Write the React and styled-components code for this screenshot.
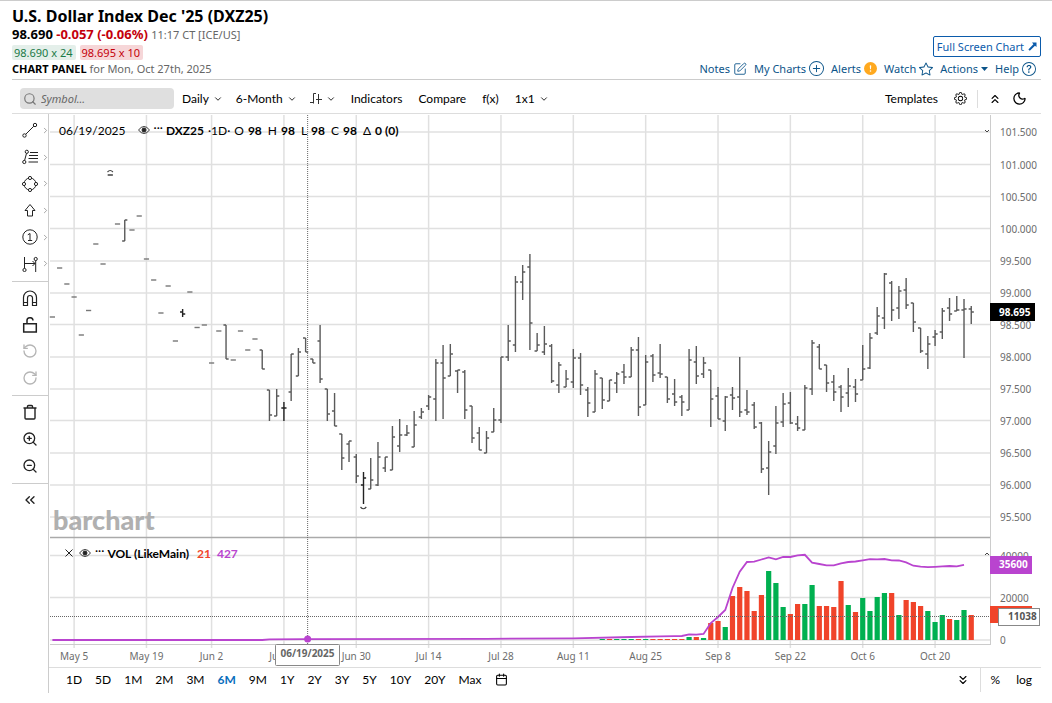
import React, { Component } from 'react'
import styled, { createGlobalStyle } from 'styled-components'
import { BsGear, BsStar, BsPlusCircle, BsQuestionCircle, BsExclamationCircleFill } from 'react-icons/bs'
import {
  Moon, Search, SquarePen, ChevronDown, ChevronRight, ChevronsUp, ChevronsDown,
  ChevronsLeft, RotateCcw, RotateCw, ZoomIn, ZoomOut, Calendar
} from 'lucide-react'

const GlobalStyle = createGlobalStyle`
  * { box-sizing: border-box; }
  body {
    margin: 0;
    background: #fff;
    color: #000;
    font-family: 'Noto Sans', 'Open Sans', sans-serif;
  }
  button {
    padding: 0;
    border: 0;
    background: none;
    color: inherit;
    font: inherit;
    cursor: pointer;
  }
`
const Page = styled.div`
  border-top: 1px solid #ccc;
  padding: 0 11px 10px 12px;
`
const Header = styled.header`
  display: flex;
  justify-content: space-between;
  align-items: flex-end;
  padding: 5px 0 2px;
  border-bottom: 1px solid #ccc;
`
const Title = styled.h1`
  margin: 0;
  font-size: 16px;
  line-height: 20px;
  font-weight: 700;
`
const PriceLine = styled.div`
  font-size: 13px;
  line-height: 17px;
  font-weight: 700;
`
const Change = styled.span`
  color: #c4000b;
`
const Muted = styled.span`
  color: #666;
  font-size: 11px;
  font-weight: 400;
`
const Quotes = styled.div`
  display: flex;
  gap: 4px;
  margin: 2px 0 1px;
`
const Quote = styled.span`
  padding: 0 3px 0 2px;
  border-radius: 2px;
  font-size: 11px;
  line-height: 15px;
  color: ${p => p.ask ? '#c4000b' : '#1a7a48'};
  background: ${p => p.ask ? '#f6d6d8' : '#e4efea'};
`
const PanelLine = styled.div`
  font-size: 11px;
  line-height: 16px;
`
const HeaderRight = styled.div`
  display: flex;
  flex-direction: column;
  align-items: flex-end;
  gap: 3px;
`
const FullScreen = styled.a`
  display: flex;
  align-items: center;
  gap: 4px;
  height: 21px;
  padding: 0 3px;
  border: 1px solid #0b5bab;
  border-radius: 2px;
  color: #0b5bab;
  font-size: 11px;
  text-decoration: none;
`
const Links = styled.nav`
  display: flex;
  gap: 7px;
  padding-right: 5px;
`
const HeaderLink = styled.a`
  display: flex;
  align-items: center;
  gap: 3px;
  height: 17px;
  color: #0b5489;
  font-size: 11px;
  text-decoration: none;
`
const Toolbar = styled.div`
  display: flex;
  align-items: center;
  height: 34px;
  padding: 4px 14px 0 8px;
  border-bottom: 1px solid #ddd;
  font-family: Lato, sans-serif;
  font-size: 12px;
`
const SearchBox = styled.label`
  display: flex;
  align-items: center;
  gap: 4px;
  width: 154px;
  height: 21px;
  margin-right: 8px;
  padding: 0 3px;
  border-radius: 4px;
  background: #dfdfdf;
  color: #777;
`
const SearchInput = styled.input`
  flex: 1;
  min-width: 0;
  padding: 0;
  border: 0;
  outline: 0;
  background: transparent;
  font: italic 11px 'Noto Sans', sans-serif;
  &::placeholder { color: #666; }
`
const ToolButton = styled.button`
  display: flex;
  align-items: center;
  gap: 4px;
  height: 21px;
  margin-right: ${p => p.gap || 16}px;
`
const IconButton = styled.button`
  display: flex;
`
const ToolbarEnd = styled.div`
  display: flex;
  align-items: center;
  gap: 10px;
  margin-left: auto;
`
const Divider = styled.span`
  width: 1px;
  height: ${p => p.size}px;
  background: #ddd;
`
const Body = styled.div`
  display: flex;
`
const Sidebar = styled.aside`
  flex: none;
  width: 37px;
  border-right: 1px solid #ccc;
`
const ToolGroup = styled.div`
  display: flex;
  flex-direction: column;
  height: ${p => p.size}px;
  padding: 3px 0 4px;
  border-bottom: ${p => p.last ? 0 : 1}px solid #ccc;
`
const Tool = styled.button`
  flex: 1;
  display: grid;
  grid-template-columns: 16px 8px;
  align-items: center;
  justify-content: start;
  gap: 3px;
  padding-left: 10px;
  color: ${p => p.faded ? '#b5b5b5' : '#222'};
`
const Main = styled.main`
  flex: 1;
  min-width: 0;
`
const ChartArea = styled.div`
  position: relative;
`
const ChartSvg = styled.svg`
  display: block;
  width: 100%;
  height: auto;
  font-family: 'Noto Sans', sans-serif;
  font-size: 10px;
`
const Legend = styled.div`
  position: absolute;
  top: ${p => p.top}px;
  left: ${p => p.left}px;
  display: flex;
  align-items: center;
  height: 16px;
  font: 12px Lato, sans-serif;
  white-space: pre;
`
const LegendDate = styled.span`
  margin-right: 12px;
`
const LegendButton = styled.button`
  display: flex;
  margin-right: ${p => p.gap}px;
`
const LegendDots = styled.button`
  align-self: flex-start;
  margin-right: 3px;
  line-height: 11px;
`
const LegendItem = styled.span`
  margin-right: ${p => p.gap || 4}px;
  color: ${p => p.color || '#000'};
  font-weight: ${p => p.bold ? 700 : 400};
`
const BottomBar = styled.div`
  display: flex;
  align-items: center;
  gap: 13px;
  height: 26px;
  padding: 0 9px 2px 17px;
  border-top: 1px solid #ddd;
  font: 12px Lato, sans-serif;
`
const RangeButton = styled.button`
  color: ${p => p.active ? '#0a6ebd' : '#000'};
  font-weight: ${p => p.active ? 700 : 400};
`
const BottomEnd = styled.div`
  display: flex;
  align-items: center;
  gap: 10px;
  margin-left: auto;
`
const ScaleButtons = styled.div`
  display: flex;
  gap: 16px;
`

const FIRST_X = 52.4
const STEP = 7.235
const barX = i => FIRST_X + i * STEP

// open, high, low, close on the vertical scale of the plot; one number is a flat day
const BARS = [
  317, 268, 284, 297, 335, 310.5, 244, 264, 175, 224, [241, 220, 241, 220], 230,
  216, 259, 280, 313, 286, 341, [312, 309, 317, 314], 292, 327.5, 325, 363, 331,
  [325, 325, 359, 359], 360, 331, 350, 339, [350, 350, 369, 369],
  [390, 390, 421, 415], [416, 389, 416, 396], [408, 402, 421, 408], [392, 354, 401, 354],
  [376, 348, 376, 352], [338, 338, 352, 352], [359, 359, 363, 363], [341, 325, 383, 379],
  [389, 389, 421, 414], [411, 393, 426, 426], [434, 434, 470, 458], [444, 441, 462, 441],
  [457, 454, 483, 476], [485, 472, 504, 478], [489, 458, 489, 480], [485, 442, 486, 457],
  [468, 457, 472, 457], [470, 426, 470, 437], [446, 419, 452, 435], [435, 425, 436, 433],
  [447, 411, 447, 425], [417, 408, 419, 412], [406, 395, 410, 397], [399, 359, 421, 363],
  [363, 345, 419, 378], [376, 344, 376, 354], [371, 370, 393, 370], [372, 370, 419, 410],
  [406, 406, 443, 438], [433, 427, 450, 450], [453, 431, 453, 438], [432, 408, 432, 420],
  [420, 357, 423, 357], [357, 325, 361, 341], [345, 276, 352, 282], [282, 265, 300, 272],
  [267, 254, 350, 323], [351, 333, 351, 345], [352, 326, 355, 344], [346, 344, 383, 381],
  [385, 362, 393, 365], [387, 370, 387, 379], [382, 349, 388, 358], [358, 353, 395, 385],
  [390, 387, 417, 403], [412, 370, 412, 374], [378, 378, 409, 400], [401, 380, 401, 380],
  [383, 372, 393, 374], [372, 364, 384, 377], [377, 347, 377, 350], [350, 337, 416, 407],
  [405, 355, 405, 362], [356, 354, 382, 375], [373, 344, 378, 374], [377, 377, 403, 399],
  [394, 379, 406, 402], [397, 395, 416, 402], [410, 349, 410, 360], [362, 346, 384, 376],
  [374, 357, 378, 363], [370, 370, 427, 399], [396, 387, 419, 419], [421, 396, 431, 397],
  [395, 387, 410, 398], [397, 357, 417, 412], [410, 390, 415, 412], [405, 402, 429, 427],
  [423, 422, 473, 469], [468, 441, 495, 452], [446, 406, 454, 423], [422, 393, 427, 404],
  [403, 392, 424, 423], [424, 416, 431, 428], [430, 385, 430, 388], [389, 340, 395, 343],
  [347, 344, 369, 369], [365, 365, 392, 383], [382, 375, 401, 392], [387, 385, 412, 397],
  [393, 368, 407, 386], [387, 379, 402, 394], [380, 345, 380, 369], [368, 333, 369, 338],
  [333, 307, 335, 316], [318, 273, 329, 274], [283, 281, 321, 310], [308, 286, 319, 291],
  [290, 278, 309, 305], [303, 303, 332, 322], [328, 328, 353, 351], [354, 336, 369, 344],
  [337, 330, 346, 334], [332, 308, 339, 311], [308, 298, 321, 314], [311, 296, 311, 310],
  [310, 299, 358, 309], [309, 306, 324, 312]
]

const STRONG_BARS = [8, 18, 32, 43]

const PRICES = [
  ['101.500', 132], ['101.000', 164.5], ['100.500', 196.5], ['100.000', 228.5],
  ['99.500', 261], ['99.000', 293], ['98.500', 324.5], ['98.000', 357],
  ['97.500', 389], ['97.000', 420.5], ['96.500', 453], ['96.000', 485], ['95.500', 517]
]
const VOLUMES = [['40000', 555.5], ['20000', 597.5], ['0', 640]]
const DATES = [
  ['May 5', 3], ['May 19', 13], ['Jun 2', 22], ['Jun 16', 32], ['Jun 30', 42],
  ['Jul 14', 52], ['Jul 28', 62], ['Aug 11', 72], ['Aug 25', 82], ['Sep 8', 92],
  ['Sep 22', 102], ['Oct 6', 112], ['Oct 20', 122]
]

// height of the volume bar, negative on a down day
const FIRST_VOLUME = 76
const VOLUME_BARS = [
  1, -1, 1, 1, 1, -1, 1, -1, -1, -1, -1, -1,
  3, -3, 2, -17, -19, 13, -44, -53, -49, -29, -45, 69, 57, 33, -26, -36, 36, 55,
  -34, -34, -33, -59, 35, -28, 42, 29, 43, 47, -47, 25, -40, -38, -34, 29, 18, 25,
  -21, 20, 30, -25
]

const AVERAGE = [
  [0, 640], [29, 640], [30, 639.3], [35, 639.2], [60, 638.8], [72, 638.3], [80, 637],
  [84, 636.4], [86, 636.2], [87, 636], [88, 634.4], [89, 634.7], [90, 634], [91, 623],
  [92, 617], [93, 610], [94, 588], [95, 571.7], [96, 562], [97, 561.7], [98, 559.5],
  [99, 557.4], [100, 559.3], [101, 557], [102, 557], [103, 555.3], [104, 554.8],
  [105, 562.6], [106, 564], [107, 565.4], [108, 565.4], [109, 563.3], [110, 562],
  [111, 561.5], [112, 560.4], [113, 559.2], [114, 559.4], [115, 559], [116, 560.4],
  [117, 560.5], [118, 562.4], [119, 565.7], [120, 566.7], [121, 567.2], [122, 566.8],
  [123, 566.4], [124, 566], [125, 566.3], [126, 564.8]
]

const RANGES = ['1D', '5D', '1M', '2M', '3M', '6M', '9M', '1Y', '2Y', '3Y', '5Y', '10Y', '20Y', 'Max']

const Icon = styled.svg.attrs({ width: 16, height: 16, viewBox: '0 0 16 16' })`
  display: block;
  fill: none;
  stroke: currentColor;
  stroke-width: 1;
`

const LineIcon = () => (
  <Icon>
    <circle cx='2.5' cy='13.5' r='1.7' />
    <circle cx='13' cy='3' r='1.7' />
    <path d='M3.8 12.2L11.8 4.2' />
  </Icon>
)
const FibIcon = () => (
  <Icon>
    <circle cx='2.3' cy='13' r='1.6' />
    <circle cx='4.8' cy='2.8' r='1.6' />
    <path d='M2.6 11.4L4.5 4.4M8 3.5h8M7 6.5h9M6.5 9.5h9.5M6.5 13h9.5' />
  </Icon>
)
const ShapeIcon = () => (
  <Icon>
    <circle cx='8' cy='8' r='6' />
    <g fill='#fff'>
      <circle cx='8' cy='2' r='1.6' />
      <circle cx='14' cy='8' r='1.6' />
      <circle cx='8' cy='14' r='1.6' />
      <circle cx='2' cy='8' r='1.6' />
    </g>
  </Icon>
)
const ArrowIcon = () => (
  <Icon>
    <path d='M8 2.5L13 8.5H10.5V14H5.5V8.5H3Z' strokeLinejoin='round' />
  </Icon>
)
const NumberIcon = () => (
  <Icon>
    <circle cx='8' cy='8' r='7.2' />
    <path d='M5.8 5.8L8 4.5V11.5M6 11.5h4.2' />
  </Icon>
)
const MeasureIcon = () => (
  <Icon>
    <circle cx='2.5' cy='14' r='1.6' />
    <circle cx='13.7' cy='3' r='1.6' />
    <path d='M2.5 1v11.4M13.7 4.6V16M3 7.5h10M10.5 5l2.5 2.5-2.5 2.5' />
  </Icon>
)
const MagnetIcon = () => (
  <Icon>
    <path d='M1.5 15.5V7.5a6.5 6.5 0 0 1 13 0v8h-4V8a2.5 2.5 0 0 0-5 0v7.5zM1.5 12.5h4M10.5 12.5h4' strokeWidth='1.2' />
  </Icon>
)
const UnlockIcon = () => (
  <Icon>
    <path d='M1.7 6.7h12.6v8.3H1.7zM5 6.5V4a3 3 0 0 1 6-.5' strokeWidth='1.5' />
  </Icon>
)
const TrashIcon = () => (
  <Icon>
    <path d='M1.5 4h13M3 4v10a1 1 0 0 0 1 1h8a1 1 0 0 0 1-1V4M5.5 4V2.5a1 1 0 0 1 1-1h3a1 1 0 0 1 1 1V4' strokeWidth='1.4' />
  </Icon>
)
const EyeIcon = () => (
  <svg width='12' height='10' viewBox='0 0 12 10' fill='none' stroke='#222' strokeWidth='.9'>
    <path d='M.5 5Q6-2 11.5 5Q6 12 .5 5Z' />
    <circle cx='6' cy='5' r='2' fill='#222' />
  </svg>
)
const BarsIcon = () => (
  <svg width='12' height='11' viewBox='0 0 12 11' fill='none' stroke='#333'>
    <path d='M0 9.5H3M3.5 10.5V.5H6M8.5 1v10M6 6.5H12' />
  </svg>
)

const SIDE_GROUPS = [
  { size: 168, tools: [['Lines', LineIcon], ['Fibonacci', FibIcon], ['Shapes', ShapeIcon], ['Arrows', ArrowIcon], ['Labels', NumberIcon], ['Measure', MeasureIcon]], more: true },
  { size: 114, tools: [['Magnet', MagnetIcon], ['Unlock', UnlockIcon], ['Undo', RotateCcw, true], ['Redo', RotateCw, true]] },
  { size: 88, tools: [['Delete', TrashIcon], ['Zoom in', ZoomIn], ['Zoom out', ZoomOut]] },
  { size: 32, tools: [['Collapse', ChevronsLeft]], last: true }
]

class Chart extends Component {
  renderGrid () {
    return (
      <g stroke='#e0e0e0' strokeWidth='1.5'>
        {DATES.map(([label, i]) => <line key={label} x1={barX(i)} x2={barX(i)} y1='115' y2='648' />)}
        {PRICES.concat(VOLUMES).map(([label, y]) => <line key={label} x1='50' x2='990' y1={y} y2={y} />)}
        <path d='M990.5 115V645M50 644.5H990.5' stroke='#ccc' strokeWidth='1' />
      </g>
    )
  }

  renderBar (bar, i) {
    const x = barX(i)
    const strong = STRONG_BARS.includes(i)
    if (!Array.isArray(bar)) {
      return <path key={i} d={`M${x - 2.6} ${bar}H${x + 2.6}`} stroke={strong ? '#333' : '#777'} />
    }
    const [open, high, low, close] = bar
    return (
      <path
        key={i}
        d={`M${x} ${high}V${low}M${x - 2.6} ${open}H${x}M${x} ${close}H${x + 2.6}`}
        stroke={strong ? '#222' : '#5a5a5a'}
      />
    )
  }

  renderVolume (size, n) {
    const height = Math.abs(size)
    return (
      <rect
        key={n}
        x={barX(FIRST_VOLUME + n) - 2.6}
        y={640 - height}
        width='5.2'
        height={height}
        fill={size < 0 ? '#f0442a' : '#00b050'}
      />
    )
  }

  render () {
    const cursor = barX(35) + 2
    return (
      <ChartSvg viewBox='49 114 992 553' role='img' aria-label='DXZ25 daily price and volume'>
        {this.renderGrid()}
        <text x='53' y='530' fontFamily='Lato, sans-serif' fontSize='27' fontWeight='900' fill='#b0b0b0'>barchart</text>
        <path d='M50 537.5H990' stroke='#aaa' strokeWidth='1.5' />
        <g fill='none' strokeWidth='1.4'>{BARS.map(this.renderBar)}</g>
        <path d='M107.5 172q2.7-3 5.4 0M360.5 507q2.9 3.5 5.8 0' fill='none' stroke='#444' strokeWidth='1.2' />
        {VOLUME_BARS.map(this.renderVolume)}
        <polyline
          points={AVERAGE.map(([i, y]) => `${barX(i)},${y}`).join(' ')}
          fill='none'
          stroke='#b944cf'
          strokeWidth='1.8'
        />
        <g stroke='#666' strokeDasharray='1 1'>
          <line x1={cursor} x2={cursor} y1='115' y2='644' />
          <line x1='50' x2='998' y1='616.5' y2='616.5' />
        </g>
        <circle cx={cursor} cy='639' r='3.5' fill='#b944cf' />
        <path d='M985 130l2 2 2-2M985 555l2-2 2 2' fill='none' stroke='#444' />
        <g fill='#6c6c6c'>
          {PRICES.concat(VOLUMES).map(([label, y]) => <text key={label} x='1000' y={y + 4}>{label}</text>)}
          {DATES.map(([label, i]) => <text key={label} x={barX(i)} y='660' textAnchor='middle'>{label}</text>)}
        </g>
        <g fontWeight='700'>
          <rect x='990' y='303' width='45' height='18' fill='#000' />
          <text x='999' y='316' fill='#fff'>98.695</text>
          <rect x='990' y='556' width='42' height='18' fill='#b944cf' />
          <text x='999' y='568' fill='#fff'>35600</text>
          <rect x='990' y='606' width='42' height='17' fill='#f0442a' />
          <rect x='998.5' y='608.5' width='41' height='17' fill='#fff' stroke='#888' />
          <text x='1008' y='620' fill='#555'>11038</text>
          <rect x='275.5' y='644.5' width='64' height='21' rx='1' fill='#fff' stroke='#888' />
          <text x='307.5' y='657' fill='#666' textAnchor='middle'>06/19/2025</text>
        </g>
      </ChartSvg>
    )
  }
}

class App extends Component {
  constructor (props) {
    super(props)
    this.state = { range: '6M', symbol: '' }
  }

  renderMenu (label, icon) {
    return (
      <ToolButton gap={icon ? 15 : 13} aria-label={label}>
        {icon || label}
        <ChevronDown size={10} />
      </ToolButton>
    )
  }

  renderGroup ({ size, tools, more, last }, i) {
    return (
      <ToolGroup key={i} size={size} last={last}>
        {tools.map(([name, Glyph, faded]) =>
          <Tool key={name} aria-label={name} faded={faded}>
            <Glyph size={16} />
            {more && <ChevronRight size={9} color='#888' />}
          </Tool>
        )}
      </ToolGroup>
    )
  }

  render () {
    const { range, symbol } = this.state
    return (
      <Page>
        <GlobalStyle />
        <Header>
          <div>
            <Title>U.S. Dollar Index Dec '25 (DXZ25)</Title>
            <PriceLine>98.690 <Change>-0.057 (-0.06%)</Change> <Muted>11:17 CT [ICE/US]</Muted></PriceLine>
            <Quotes>
              <Quote>98.690 x 24</Quote>
              <Quote ask>98.695 x 10</Quote>
            </Quotes>
            <PanelLine><b>CHART PANEL</b> <Muted>for Mon, Oct 27th, 2025</Muted></PanelLine>
          </div>
          <HeaderRight>
            <FullScreen href='#full'>
              Full Screen Chart
              <svg width='9' height='9' viewBox='0 0 9 9' fill='#0b5bab'>
                <path d='M4 .5H8.5V5L7 3.7 1.8 8.8 .4 7.4 5.4 2.2Z' />
              </svg>
            </FullScreen>
            <Links>
              <HeaderLink href='#notes'>Notes <SquarePen size={14} strokeWidth={1.5} /></HeaderLink>
              <HeaderLink href='#charts'>My Charts <BsPlusCircle size={15} /></HeaderLink>
              <HeaderLink href='#alerts'>Alerts <BsExclamationCircleFill size={13} color='#ffa91f' /></HeaderLink>
              <HeaderLink href='#watch'>Watch <BsStar size={14} /></HeaderLink>
              <HeaderLink href='#actions'>
                Actions
                <svg width='7' height='4' viewBox='0 0 7 4'><path d='M0 0h7L3.5 4z' fill='#0b5489' /></svg>
              </HeaderLink>
              <HeaderLink href='#help'>Help <BsQuestionCircle size={14} /></HeaderLink>
            </Links>
          </HeaderRight>
        </Header>
        <Toolbar>
          <SearchBox>
            <Search size={14} />
            <SearchInput
              aria-label='Symbol'
              placeholder='Symbol...'
              value={symbol}
              onChange={e => this.setState({ symbol: e.target.value })}
            />
          </SearchBox>
          {this.renderMenu('Daily')}
          {this.renderMenu('6-Month')}
          {this.renderMenu('Bar type', <BarsIcon />)}
          <ToolButton>Indicators</ToolButton>
          <ToolButton>Compare</ToolButton>
          <ToolButton>f(x)</ToolButton>
          {this.renderMenu('1x1')}
          <ToolbarEnd>
            <ToolButton gap={6}>Templates</ToolButton>
            <IconButton aria-label='Settings'><BsGear size={13} /></IconButton>
            <Divider size={18} />
            <IconButton aria-label='Collapse header'><ChevronsUp size={14} /></IconButton>
            <IconButton aria-label='Dark mode'><Moon size={15} /></IconButton>
          </ToolbarEnd>
        </Toolbar>
        <Body>
          <Sidebar>{SIDE_GROUPS.map(this.renderGroup)}</Sidebar>
          <Main>
            <ChartArea>
              <Chart />
              <Legend top={8} left={10}>
                <LegendDate>06/19/2025</LegendDate>
                <LegendButton gap={4} aria-label='Hide series'><EyeIcon /></LegendButton>
                <LegendDots>···</LegendDots>
                <LegendItem bold>DXZ25</LegendItem>
                <LegendItem>·1D·</LegendItem>
                <LegendItem>O</LegendItem><LegendItem bold gap={6}>98</LegendItem>
                <LegendItem>H</LegendItem><LegendItem bold gap={6}>98</LegendItem>
                <LegendItem>L</LegendItem><LegendItem bold gap={6}>98</LegendItem>
                <LegendItem>C</LegendItem><LegendItem bold gap={6}>98</LegendItem>
                <LegendItem>Δ</LegendItem><LegendItem bold>0 (0)</LegendItem>
              </Legend>
              <Legend top={431} left={16}>
                <LegendButton gap={6} aria-label='Remove study'>
                  <svg width='8' height='8' viewBox='0 0 8 8' stroke='#222'><path d='M.5 .5l7 7M7.5 .5l-7 7' /></svg>
                </LegendButton>
                <LegendButton gap={4} aria-label='Hide study'><EyeIcon /></LegendButton>
                <LegendDots>···</LegendDots>
                <LegendItem bold gap={8}>VOL (LikeMain)</LegendItem>
                <LegendItem bold gap={6} color='#f0442a'>21</LegendItem>
                <LegendItem bold color='#b944cf'>427</LegendItem>
              </Legend>
            </ChartArea>
            <BottomBar>
              {RANGES.map(name =>
                <RangeButton
                  key={name}
                  active={range === name}
                  onClick={() => this.setState({ range: name })}
                >
                  {name}
                </RangeButton>
              )}
              <IconButton aria-label='Pick dates'><Calendar size={13} /></IconButton>
              <BottomEnd>
                <IconButton aria-label='Expand'><ChevronsDown size={14} /></IconButton>
                <Divider size={24} />
                <ScaleButtons>
                  <button>%</button>
                  <button>log</button>
                </ScaleButtons>
              </BottomEnd>
            </BottomBar>
          </Main>
        </Body>
      </Page>
    )
  }
}

export default App
